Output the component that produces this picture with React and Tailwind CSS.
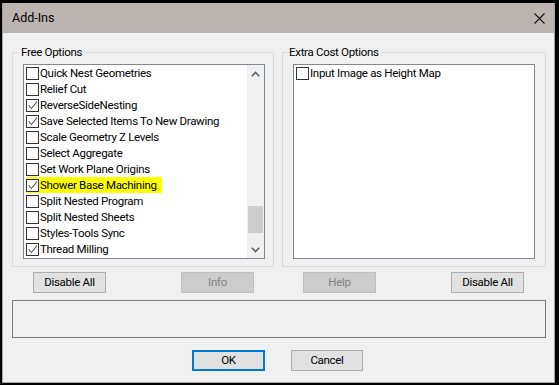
import { useState } from "react";

const freeOptions = [
  { name: "Quick Nest Geometries", on: false },
  { name: "Relief Cut", on: false },
  { name: "ReverseSideNesting", on: true },
  { name: "Save Selected Items To New Drawing", on: true },
  { name: "Scale Geometry Z Levels", on: false },
  { name: "Select Aggregate", on: false },
  { name: "Set Work Plane Origins", on: false },
  { name: "Shower Base Machining", on: true, mark: true },
  { name: "Split Nested Program", on: false },
  { name: "Split Nested Sheets", on: false },
  { name: "Styles-Tools Sync", on: false },
  { name: "Thread Milling", on: true },
];

function CheckBox({ on }) {
  return (
    <span className="w-[13px] h-[13px] border border-[#333333] bg-white flex items-center justify-center shrink-0">
      {on && (
        <svg width="11" height="11" viewBox="0 0 11 11">
          <polyline points="1.5,5 4.5,8.5 10,1.5" fill="none" stroke="#555555" strokeWidth="1.1" />
        </svg>
      )}
    </span>
  );
}

function Row({ item, onToggle }) {
  return (
    <div className="h-[16px] flex items-center pl-[2px]" onClick={onToggle}>
      <div className={"flex items-center gap-[1px] h-[16px] pr-[5px] " + (item.mark ? "bg-[#ffff00]" : "")}>
        <CheckBox on={item.on} />
        <span className="leading-[16px] whitespace-nowrap">{item.name}</span>
      </div>
    </div>
  );
}

function Button({ label, disabled, focus, width = "w-[73px]" }) {
  const look = disabled
    ? "bg-[#cccccc] border-[#bfbfbf] text-[#838383]"
    : focus
      ? "bg-[#e1e1e1] border-2 border-[#0078d7] text-black"
      : "bg-[#e1e1e1] border-[#adadad] text-black";
  return (
    <button className={`${width} h-[21px] border ${look} leading-none flex items-center justify-center`}>
      {label}
    </button>
  );
}

function Chevron({ up }) {
  return (
    <svg width="9" height="6" viewBox="0 0 9 6">
      <polyline
        points={up ? "0.8,5.2 4.5,1.5 8.2,5.2" : "0.8,0.8 4.5,4.5 8.2,0.8"}
        fill="none"
        stroke="#606060"
        strokeWidth="1.6"
      />
    </svg>
  );
}

function GroupBox({ title, width, pad, legendMl, children }) {
  return (
    <fieldset className={`${width} ${pad} min-w-0 h-[223px] border border-[#dcdcdc] pl-[10px] pb-[8px] pt-[3px]`}>
      <legend className={`${legendMl} px-[2px] leading-[16px]`}>{title}</legend>
      {children}
    </fieldset>
  );
}

export default function App() {
  const [items, setItems] = useState(freeOptions);
  const [extra, setExtra] = useState(false);

  const toggle = (i) =>
    setItems(items.map((it, j) => (j === i ? { ...it, on: !it.on } : it)));

  return (
    <div
      className="w-[559px] h-[385px] bg-black pl-[2px] pt-[3px] text-black text-[11.5px] tracking-[-0.3px]"
      style={{ fontFamily: 'Roboto, "Liberation Sans", Arial, sans-serif' }}
    >
      <div className="w-[553px] h-[380px] bg-[#f0f0f0] border-x border-b border-[#a3a3a3] flex flex-col">
        <div className="h-[30px] bg-[#bbb4b0] flex items-center justify-between pl-[9px] pr-[9px]">
          <span className="text-[12.5px] tracking-normal">Add-Ins</span>
          <svg width="11" height="11" viewBox="0 0 11 11">
            <path d="M0.5 0.5 L10.5 10.5 M10.5 0.5 L0.5 10.5" stroke="#111111" strokeWidth="1.1" />
          </svg>
        </div>

        <div className="flex gap-[8px] pl-[9px] pt-[11px]">
          <GroupBox title="Free Options" width="w-[262px]" pad="pr-[7px]" legendMl="ml-[-4px]">
            <div className="w-[242px] h-[195px] mt-[1px] border border-[#828790] bg-white flex">
              <div className="flex-1 flex flex-col">
                {items.map((it, i) => (
                  <Row key={it.name} item={it} onToggle={() => toggle(i)} />
                ))}
              </div>
              <div className="w-[17px] bg-[#f0f0f0] flex flex-col items-center">
                <div className="h-[17px] flex items-center justify-center">
                  <Chevron up />
                </div>
                <div className="flex-1 w-full px-[1px] pt-[124px]">
                  <div className="h-[27px] bg-[#cdcdcd]" />
                </div>
                <div className="h-[17px] flex items-center justify-center">
                  <Chevron />
                </div>
              </div>
            </div>
          </GroupBox>

          <GroupBox title="Extra Cost Options" width="w-[264px]" pad="pr-[9px]" legendMl="ml-[-6px]">
            <div className="w-[242px] h-[195px] mt-[1px] border border-[#828790] bg-white flex flex-col">
              <Row item={{ name: "Input Image as Height Map", on: extra }} onToggle={() => setExtra(!extra)} />
            </div>
          </GroupBox>
        </div>

        <div className="flex pt-[5px] pl-[30px]">
          <Button label="Disable All" />
          <div className="ml-[75px]">
            <Button label="Info" disabled />
          </div>
          <div className="ml-[49px]">
            <Button label="Help" disabled />
          </div>
          <div className="ml-[75px]">
            <Button label="Disable All" />
          </div>
        </div>

        <div className="ml-[9px] mt-[7px] w-[534px] h-[38px] border border-[#7a7a7a]" />

        <div className="flex pt-[12px] pl-[189px] gap-[26px]">
          <Button label="OK" focus />
          <Button label="Cancel" width="w-[72px]" />
        </div>
      </div>
    </div>
  );
}
